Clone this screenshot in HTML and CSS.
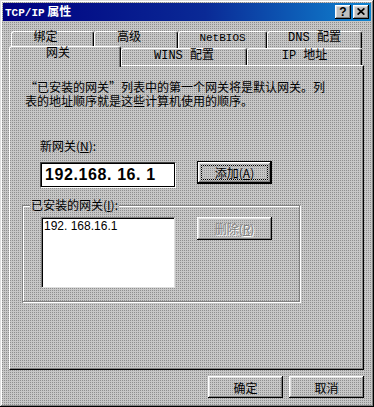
FILE: index.html
```html
<!DOCTYPE html>
<html lang="zh-CN">
<head>
    <meta charset="UTF-8">
    <meta name="viewport" content="width=device-width, initial-scale=1.0">
    <title>TCP/IP 属性</title>
    <link rel="stylesheet" href="styles.css">
</head>
<body>
    <div class="window">
        <div class="titlebar">
            <span class="title"><span class="mono">TCP/IP</span> 属性</span>
            <div class="title-btns">
                <button class="tbtn help">?</button>
                <button class="tbtn">
                    <svg width="8" height="7" viewBox="0 0 8 7"><path d="M0.6 0.4 L7.4 6.6 M7.4 0.4 L0.6 6.6" stroke="#000" stroke-width="1.7"/></svg>
                </button>
            </div>
        </div>

        <!-- tab strip, two rows -->
        <div class="tabs">
            <div class="tab-row back">
                <div class="tab t-bind shift">绑定</div>
                <div class="tab t-adv shift">高级</div>
                <div class="tab t-netbios">NetBIOS</div>
                <div class="tab t-dns">DNS 配置</div>
            </div>
            <div class="tab-row front">
                <div class="tab active t-gw shift">网关</div>
                <div class="tab t-wins">WINS 配置</div>
                <div class="tab t-ip">IP 地址</div>
            </div>
        </div>

        <div class="panel">
            <p class="desc">“已安装的网关”列表中的第一个网关将是默认网关。列<br>表的地址顺序就是这些计算机使用的顺序。</p>

            <div class="field-label">新网关(<u>N</u>):</div>
            <div class="gw-row">
                <div class="ip-input">192.168. 16. 1</div>
                <button class="btn default">添加(<u>A</u>)</button>
            </div>

            <div class="group">
                <span class="legend">已安装的网关(<u>I</u>):</span>
                <div class="group-row">
                    <div class="listbox">
                        <div class="item">192. 168.16.1</div>
                    </div>
                    <button class="btn" disabled>删除(<u>R</u>)</button>
                </div>
            </div>
        </div>

        <div class="dlg-btns">
            <button class="btn dlg">确定</button>
            <button class="btn dlg">取消</button>
        </div>
    </div>
</body>
</html>
```

FILE: styles.css
```css
* {
    margin: 0;
    padding: 0;
    box-sizing: border-box;
}

body {
    font-family: "Noto Sans CJK SC", sans-serif;
    font-size: 12px;
    color: #000;
    background: #c0c0c0;
}

/* dithered dialog gray */
.window,
.tab.active,
.legend {
    background-color: #c6c6c6;
    background-image: conic-gradient(from 0deg at 1px 1px, #c6c6c6 0 75%, #8e8e8e 0);
    background-size: 2px 2px;
    background-attachment: fixed;
}

.window {
    width: 374px;
    height: 407px;
    padding: 3px;
    box-shadow: inset -1px -1px #000, inset 1px 1px #dfdfdf, inset -2px -2px #808080, inset 2px 2px #fff;
}

.titlebar {
    height: 18px;
    display: flex;
    align-items: center;
    justify-content: space-between;
    padding: 0 2px;
    background: linear-gradient(90deg, #000080 0%, #0a2a96 55%, #1084d0 100%);
}

.title {
    color: #fff;
    font-weight: bold;
    font-size: 12px;
    line-height: 14px;
}

.mono {
    font-family: "Liberation Mono", monospace;
    font-size: 11px;
}

.title-btns {
    display: flex;
    gap: 2px;
}

.tbtn {
    width: 16px;
    height: 14px;
    border: none;
    display: flex;
    align-items: center;
    justify-content: center;
    background: #c0c0c0;
    box-shadow: inset -1px -1px #000, inset 1px 1px #fff, inset -2px -2px #808080, inset 2px 2px #dfdfdf;
    font-family: "Liberation Sans", sans-serif;
    font-weight: bold;
    font-size: 12px;
    line-height: 12px;
    padding: 0 0 1px 0;
}

/* tabs */
.tabs {
    margin-top: 10px;
    margin-left: 6px;
}

.tab-row {
    display: flex;
}

.tab-row.back {
    margin-left: 2px;
    height: 17px;
}

.tab-row.front {
    height: 19px;
    margin-top: -2px;
    align-items: flex-end;
    position: relative;
    z-index: 1;
}

.tab {
    height: 17px;
    border: 1px solid;
    border-color: #fff #000 transparent #fff;
    border-bottom: none;
    border-radius: 3px 3px 0 0;
    box-shadow: inset -1px 0 #808080;
    text-align: center;
    font-family: "Liberation Mono", "Noto Sans CJK SC", monospace;
    font-size: 12px;
    line-height: 14px;
    white-space: nowrap;
}

.tab-row.back .tab {
    line-height: 13px;
}

.tab.active {
    height: 21px;
    margin-bottom: -2px;
    line-height: 15px;
}

.tab.shift { padding-right: 14px; }

.t-bind { width: 83px; }
.t-adv { width: 84px; }
.t-netbios { width: 89px; font-size: 11px; }
.t-dns { width: 95px; }
.t-gw { width: 112px; }
.t-wins { width: 126px; }
.t-ip { width: 115px; }

/* page body */
.panel {
    margin-left: 6px;
    width: 355px;
    height: 305px;
    padding: 14px 0 0 12px;
    border: 1px solid;
    border-color: #fff #000 #000 #fff;
    box-shadow: inset -1px -1px #808080;
}

.desc {
    margin-left: 3px;
    line-height: 14px;
    white-space: nowrap;
}

.field-label {
    margin: 31px 0 0 18px;
    line-height: 14px;
}

.gw-row {
    display: flex;
    align-items: flex-start;
    margin: 9px 0 0 18px;
}

.ip-input {
    width: 136px;
    height: 26px;
    background: #fff;
    border: 1px solid;
    border-color: #404040 #fff #fff #404040;
    box-shadow: inset 1px 1px #000, inset -1px -1px #000;
    padding-left: 4px;
    font-family: "Liberation Sans", sans-serif;
    font-weight: bold;
    font-size: 16px;
    line-height: 24px;
    letter-spacing: 0.6px;
    white-space: pre;
}

.gw-row .btn {
    margin: -1px 0 0 21px;
}

.group {
    position: relative;
    margin-top: 17px;
    width: 278px;
    height: 97px;
    border: 1px solid #808080;
    box-shadow: 1px 1px 0 #fff, inset 1px 1px 0 #fff;
}

.legend {
    position: absolute;
    top: -8px;
    left: 7px;
    padding: 0 1px;
    line-height: 14px;
}

.group-row {
    display: flex;
    align-items: flex-start;
    padding: 11px 0 0 18px;
}

.listbox {
    width: 134px;
    height: 71px;
    background: #fff;
    border: 1px solid;
    border-color: #808080 #dfdfdf #dfdfdf #808080;
    box-shadow: inset 1px 1px #000;
    padding: 1px 0 0 2px;
}

.item {
    font-family: "Liberation Sans", sans-serif;
    font-size: 12px;
    line-height: 14px;
}

.group-row .btn {
    margin-left: 22px;
}

/* buttons */
.btn {
    width: 75px;
    height: 23px;
    border: none;
    background: transparent;
    box-shadow: inset -1px -1px #000, inset 1px 1px #fff, inset -2px -2px #808080, inset 2px 2px #dfdfdf;
    font-family: "Noto Sans CJK SC", sans-serif;
    font-size: 12px;
    color: #000;
}

.btn.default {
    border: 1px solid #000;
    outline: 1px dotted #000;
    outline-offset: -5px;
}

.btn:disabled {
    color: #808080;
    text-shadow: 1px 1px 0 #fff;
}

.dlg-btns {
    display: flex;
    justify-content: flex-end;
    gap: 6px;
    margin: 6px 7px 0 0;
}

.btn.dlg {
    height: 22px;
}
```
